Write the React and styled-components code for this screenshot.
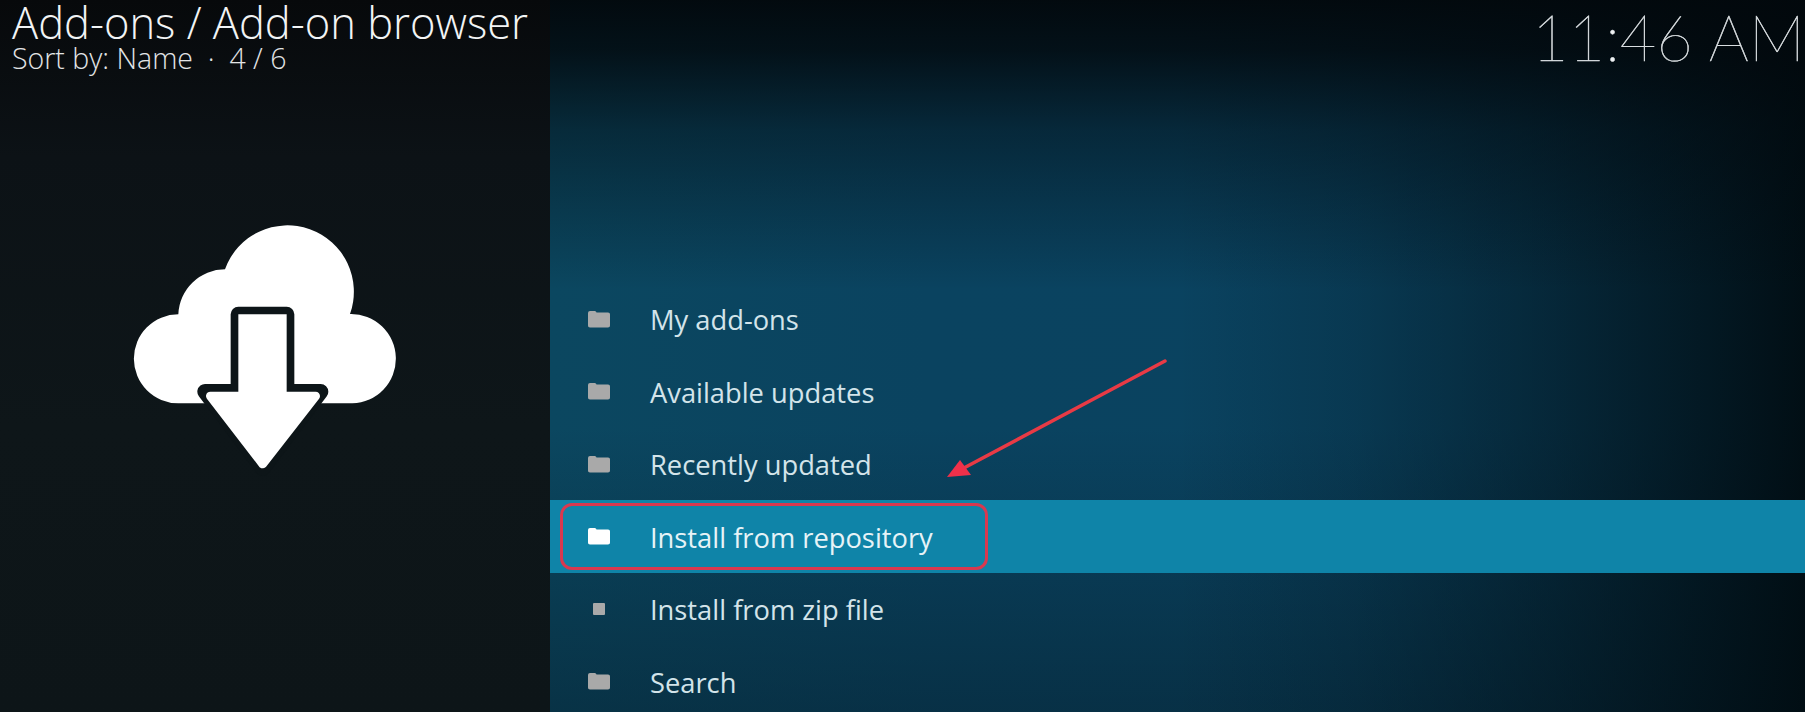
import React from "react";
import styled, { createGlobalStyle } from "styled-components";

const Global = createGlobalStyle`
  html, body {
    margin: 0;
    padding: 0;
    background: #0b1114;
  }
`;

const Screen = styled.div`
  position: relative;
  display: flex;
  width: 1805px;
  height: 712px;
  overflow: hidden;
  font-family: "Open Sans", "Noto Sans", sans-serif;
  color: #fff;
`;

const Sidebar = styled.aside`
  flex: 0 0 550px;
  display: flex;
  flex-direction: column;
  background: linear-gradient(180deg, #07090b 0%, #0c1216 22%, #0e1619 60%, #0d1518 100%);
`;

const Heading = styled.div`
  padding: 1px 0 0 12px;
`;

const Title = styled.h1`
  margin: 0;
  font-size: 43.5px;
  font-weight: 300;
  line-height: 44px;
  color: #f2f4f5;
  white-space: nowrap;
`;

const Subtitle = styled.div`
  font-size: 28.5px;
  font-weight: 300;
  line-height: 26px;
  color: #e2e4e6;
  white-space: nowrap;
`;

const CloudIcon = styled.svg`
  display: block;
  width: 300px;
  height: 280px;
  margin: 129px 0 0 110px;
`;

const Main = styled.main`
  flex: 1;
  min-width: 0;
  display: flex;
  flex-direction: column;
  background:
    linear-gradient(180deg, rgba(2, 8, 12, 0.97) 0, rgba(2, 8, 12, 0.85) 50px, rgba(2, 8, 12, 0.45) 130px, rgba(2, 8, 12, 0) 290px),
    linear-gradient(90deg, rgba(1, 12, 17, 0) 50%, rgba(1, 12, 17, 0.18) 64%, rgba(1, 12, 17, 0.5) 80%, rgba(1, 12, 17, 0.95) 100%),
    linear-gradient(0deg, rgba(5, 30, 44, 0.5) 0, rgba(5, 30, 44, 0) 40%),
    linear-gradient(90deg, #0b4760 0, #0a4360 30%, #0a4260 100%);
`;

const TopBar = styled.header`
  flex: 0 0 282.5px;
  display: flex;
  justify-content: flex-end;
`;

const Clock = styled.div`
  font-family: "Lato", sans-serif;
  font-weight: 100;
  font-size: 63px;
  line-height: 74px;
  color: #eef1f2;
  -webkit-text-stroke: 0.5px #d8dde0;
  white-space: nowrap;
`;

const List = styled.ul`
  list-style: none;
  margin: 0;
  padding: 0;
`;

const Row = styled.li`
  display: flex;
  align-items: center;
  height: 72.5px;
  background: ${({ $active }) => ($active ? "#0f84a8" : "transparent")};
`;

const IconSlot = styled.span`
  flex: 0 0 100px;
  display: flex;
  justify-content: flex-start;
  padding-left: 37px;
  box-sizing: border-box;
  color: ${({ $active }) => ($active ? "#ffffff" : "#a9a9a9")};
`;

const Label = styled.span`
  font-size: 27.3px;
  line-height: 34px;
  margin-top: 3px;
  color: ${({ $active }) => ($active ? "#e6f3f7" : "#d3e4ea")};
  white-space: nowrap;
`;

const FolderGlyph = styled.svg`
  display: block;
  width: 24px;
  height: 18px;
`;

const FileDot = styled.span`
  display: block;
  width: 12px;
  height: 12px;
  margin-left: 6px;
  border-radius: 1px;
  background: currentColor;
`;

const Callout = styled.div`
  position: absolute;
  left: 560px;
  top: 503px;
  width: 428px;
  height: 67px;
  box-sizing: border-box;
  border: 3px solid #d8384f;
  border-radius: 12px;
`;

const Pointer = styled.svg`
  position: absolute;
  left: 940px;
  top: 355px;
  width: 235px;
  height: 130px;
`;

const items = [
  { label: "My add-ons", kind: "folder" },
  { label: "Available updates", kind: "folder" },
  { label: "Recently updated", kind: "folder" },
  { label: "Install from repository", kind: "folder", active: true },
  { label: "Install from zip file", kind: "file" },
  { label: "Search", kind: "folder" },
];

function Folder() {
  return (
    <FolderGlyph viewBox="0 0 24 18">
      <path
        fill="currentColor"
        d="M1 3.5C1 1.8 1.8 1 3 1h4.500c1 0 1.500 .5 2 1.500h11.500c1.300 0 2 .7 2 2V15.500c0 1.300-.7 2-2 2H3c-1.300 0-2-.7-2-2z"
      />
    </FolderGlyph>
  );
}

function Cloud() {
  return (
    <CloudIcon viewBox="0 0 900 840">
      <path
        fill="#fff"
        d="M205 610A133 133 0 0 1 205 343A140 140 0 0 1 345 208A192 192 0 0 1 720 342A134 134 0 0 1 727 610Z"
      />
      <path
        fill="#0d1518"
        stroke="#0d1518"
        strokeWidth="46"
        strokeLinejoin="round"
        d="M385 343H530V575H632L458 805L285 575H385Z"
      />
      <path fill="#fff" d="M385 343H530V590H385Z" />
      <path
        fill="#fff"
        stroke="#fff"
        strokeWidth="26"
        strokeLinejoin="round"
        d="M301 588H617L458 792Z"
      />
    </CloudIcon>
  );
}

export default function App() {
  return (
    <Screen>
      <Global />
      <Sidebar>
        <Heading>
          <Title>Add-ons / Add-on browser</Title>
          <Subtitle>Sort by: Name &nbsp;·&nbsp; 4 / 6</Subtitle>
        </Heading>
        <Cloud />
      </Sidebar>
      <Main>
        <TopBar>
          <Clock>11:46 AM</Clock>
        </TopBar>
        <List>
          {items.map((item) => (
            <Row key={item.label} $active={item.active}>
              <IconSlot $active={item.active}>
                {item.kind === "folder" ? <Folder /> : <FileDot />}
              </IconSlot>
              <Label $active={item.active}>{item.label}</Label>
            </Row>
          ))}
        </List>
      </Main>
      <Callout />
      <Pointer viewBox="0 0 235 130">
        <line x1="225" y1="6" x2="22" y2="114" stroke="#e83a45" strokeWidth="3.5" strokeLinecap="round" />
        <path fill="#f0304a" d="M7 122L20 105L31 120Z" />
      </Pointer>
    </Screen>
  );
}
